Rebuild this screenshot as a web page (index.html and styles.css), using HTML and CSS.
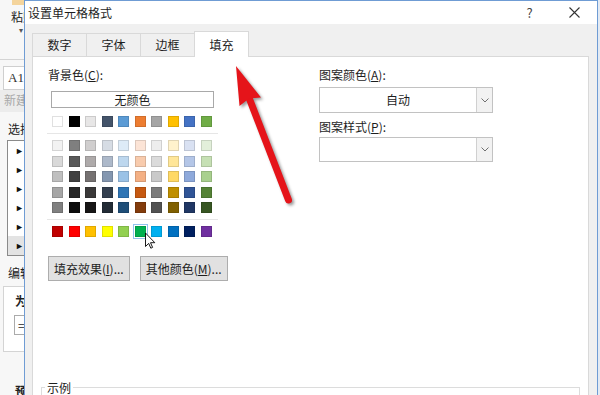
FILE: index.html
```html
<!DOCTYPE html>
<html lang="zh-CN">
<head>
    <meta charset="UTF-8">
    <title>设置单元格格式</title>
    <link rel="stylesheet" href="styles.css">
</head>
<body>
<div class="screen">
    <aside class="sheet-side">
        <div class="paste-icon"></div>
        <div class="paste-label">粘贴</div>
        <div class="side-caret">▾</div>
        <div class="ribbon-edge"></div>
        <div class="name-box">A1</div>
        <div class="new-rule">新建</div>
        <div class="side-head">选择</div>
        <ul class="rule-list">
            <li>►</li><li>►</li><li>►</li><li>►</li><li>►</li><li class="current">►</li>
        </ul>
        <div class="side-head edit-head">编辑</div>
        <div class="edit-box">
            <div class="edit-bold">为</div>
            <div class="edit-input">=</div>
        </div>
        <div class="side-head preview-head">预览</div>
    </aside>

    <div class="dialog">
        <div class="titlebar">
            <span class="title">设置单元格格式</span>
            <span class="title-btn">?</span>
            <span class="title-btn">
                <svg width="11" height="11" viewBox="0 0 11 11"><path d="M0.5 0.5 L10.5 10.5 M10.5 0.5 L0.5 10.5" stroke="#333" stroke-width="1.1" fill="none"/></svg>
            </span>
        </div>

        <div class="dialog-body">
            <div class="tabs">
                <div class="tab">数字</div>
                <div class="tab">字体</div>
                <div class="tab">边框</div>
                <div class="tab active">填充</div>
            </div>

            <div class="panel">
                <div class="cols">
                    <div class="bg-col">
                        <div class="label">背景色(<u>C</u>):</div>
                        <div class="no-color">无颜色</div>

                        <div class="swatches">
                            <span style="background:#ffffff"></span><span style="background:#000000"></span><span style="background:#e7e6e6"></span><span style="background:#44546a"></span><span style="background:#5b9bd5"></span><span style="background:#ed7d31"></span><span style="background:#a5a5a5"></span><span style="background:#ffc000"></span><span style="background:#4472c4"></span><span style="background:#70ad47"></span>
                        </div>
                        <div class="sep"></div>
                        <div class="swatches shades">
                            <span style="background:#f2f2f2"></span><span style="background:#7f7f7f"></span><span style="background:#d0cece"></span><span style="background:#d6dce4"></span><span style="background:#ddebf7"></span><span style="background:#fce4d6"></span><span style="background:#ededed"></span><span style="background:#fff2cc"></span><span style="background:#d9e1f2"></span><span style="background:#e2efda"></span>
                            <span style="background:#d9d9d9"></span><span style="background:#595959"></span><span style="background:#aeaaaa"></span><span style="background:#adb9ca"></span><span style="background:#bdd7ee"></span><span style="background:#f8cbad"></span><span style="background:#dbdbdb"></span><span style="background:#ffe699"></span><span style="background:#b4c6e7"></span><span style="background:#c6e0b4"></span>
                            <span style="background:#bfbfbf"></span><span style="background:#404040"></span><span style="background:#757171"></span><span style="background:#8497b0"></span><span style="background:#9bc2e6"></span><span style="background:#f4b084"></span><span style="background:#c9c9c9"></span><span style="background:#ffd966"></span><span style="background:#8ea9db"></span><span style="background:#a9d08e"></span>
                            <span style="background:#a6a6a6"></span><span style="background:#262626"></span><span style="background:#3a3838"></span><span style="background:#333f4f"></span><span style="background:#2f75b5"></span><span style="background:#c65911"></span><span style="background:#7b7b7b"></span><span style="background:#bf8f00"></span><span style="background:#305496"></span><span style="background:#548235"></span>
                            <span style="background:#808080"></span><span style="background:#0d0d0d"></span><span style="background:#171616"></span><span style="background:#222b35"></span><span style="background:#1f4e78"></span><span style="background:#833c0c"></span><span style="background:#525252"></span><span style="background:#806000"></span><span style="background:#203764"></span><span style="background:#375623"></span>
                        </div>
                        <div class="sep"></div>
                        <div class="swatches">
                            <span style="background:#c00000"></span><span style="background:#ff0000"></span><span style="background:#ffc000"></span><span style="background:#ffff00"></span><span style="background:#92d050"></span><span class="picked" style="background:#00b050"></span><span style="background:#00b0f0"></span><span style="background:#0070c0"></span><span style="background:#002060"></span><span style="background:#7030a0"></span>
                        </div>

                        <div class="buttons">
                            <button class="btn">填充效果(<u>I</u>)...</button>
                            <button class="btn">其他颜色(<u>M</u>)...</button>
                        </div>
                    </div>

                    <div class="pattern-col">
                        <div class="label">图案颜色(<u>A</u>):</div>
                        <div class="combo">
                            <span class="combo-value">自动</span>
                            <span class="combo-arrow"><svg width="8" height="5" viewBox="0 0 8 5"><path d="M0.5 0.5 L4 4 L7.5 0.5" stroke="#707070" fill="none"/></svg></span>
                        </div>
                        <div class="label second">图案样式(<u>P</u>):</div>
                        <div class="combo tight">
                            <span class="combo-value"></span>
                            <span class="combo-arrow"><svg width="8" height="5" viewBox="0 0 8 5"><path d="M0.5 0.5 L4 4 L7.5 0.5" stroke="#707070" fill="none"/></svg></span>
                        </div>
                    </div>
                </div>

                <fieldset class="sample">
                    <legend>示例</legend>
                </fieldset>
            </div>
        </div>
    </div>

    <div class="sheet-right"></div>

    <!-- annotation arrow and mouse pointer drawn over the screenshot -->
    <svg class="overlay" width="600" height="395" viewBox="0 0 600 395">
        <g class="red-arrow">
            <line x1="249.5" y1="99" x2="288.5" y2="200" stroke="#e5141a" stroke-width="7" stroke-linecap="round"/>
            <polygon points="236,66 261,97.5 249,98.5 239.5,106" fill="#e5141a"/>
        </g>
        <path d="M145.5 233 V246.5 L148.7 243.4 L150.8 248.2 L152.6 247.4 L150.5 242.7 H154.8 Z" fill="#fff" stroke="#000" stroke-width="0.9" stroke-linejoin="round"/>
    </svg>
</div>
</body>
</html>
```

FILE: styles.css
```css
* {
    box-sizing: border-box;
}

body {
    margin: 0;
    font-family: "Noto Sans CJK SC", "Noto Sans", sans-serif;
    font-size: 12px;
    color: #1e1e1e;
}

.screen {
    position: relative;
    width: 600px;
    height: 395px;
    overflow: hidden;
    display: flex;
    background: #f6f6f6;
}

/* excel task pane behind the dialog */
.sheet-side {
    width: 24px;
    flex: none;
    overflow: hidden;
    white-space: nowrap;
    background: #f7f7f7;
    line-height: 16px;
}

.paste-icon {
    width: 14px;
    height: 5px;
    margin-left: 12px;
    background: #f4d49c;
}

.paste-label {
    margin-top: 4px;
    padding-left: 11px;
}

.side-caret {
    height: 10px;
    line-height: 10px;
    font-size: 8px;
    padding-left: 19px;
    color: #555;
}

.ribbon-edge {
    height: 1px;
    margin-top: 24px;
    background: #d4d4d4;
}

.name-box {
    height: 24px;
    margin: 6px 0 0 3px;
    padding-left: 4px;
    line-height: 22px;
    border: 1px solid #cfcfcf;
    border-right: none;
    background: #fff;
    font-family: "Liberation Serif", serif;
    font-size: 13px;
    color: #333;
}

.new-rule {
    height: 22px;
    line-height: 20px;
    padding-left: 4px;
    background: #ececec;
    color: #a8a8a8;
}

.side-head {
    margin-top: 9px;
    padding-left: 8px;
    color: #222;
}

.rule-list {
    list-style: none;
    margin: 3px 0 0 7px;
    padding: 0;
    border: 1px solid #8a8a8a;
    border-right: none;
    background: #fff;
}

.rule-list li {
    height: 19px;
    line-height: 19px;
    padding-left: 7px;
    font-size: 9px;
    color: #111;
}

.rule-list li.current {
    background: #e3e3e3;
}

.edit-head {
    margin-top: 9px;
}

.edit-box {
    height: 66px;
    margin: 5px 0 0 3px;
    border: 1px solid #d4d4d4;
    border-right: none;
    background: #fff;
    padding-top: 6px;
}

.edit-bold {
    padding-left: 11px;
    font-weight: bold;
}

.edit-input {
    height: 20px;
    margin: 6px 0 0 10px;
    padding-left: 3px;
    line-height: 18px;
    border: 1px solid #ababab;
    border-right: none;
}

.preview-head {
    margin-top: 31px;
    padding-left: 15px;
    font-weight: bold;
}

.sheet-right {
    flex: 1;
    background: #e3eaf3;
}

/* dialog */
.dialog {
    width: 574px;
    flex: none;
    display: flex;
    flex-direction: column;
    border: 1px solid #6f9cd4;
    border-bottom: none;
    background: #f0f0f0;
}

.titlebar {
    flex: none;
    height: 23px;
    display: flex;
    align-items: center;
    padding-left: 3px;
    background: #fff;
}

.title {
    flex: 1;
}

.title-btn {
    width: 45px;
    display: flex;
    justify-content: center;
    align-items: center;
    font-size: 13px;
    color: #444;
}

.dialog-body {
    flex: 1;
    display: flex;
    flex-direction: column;
    padding: 0 8px 0 7px;
}

.tabs {
    flex: none;
    height: 32px;
    display: flex;
    align-items: flex-end;
}

.tab {
    height: 23px;
    padding: 0 14.5px;
    line-height: 22px;
    border: 1px solid #d9d9d9;
    border-bottom: none;
    margin-right: -1px;
    background: #f0f0f0;
}

.tab.active {
    position: relative;
    z-index: 1;
    height: 26px;
    line-height: 25px;
    margin-bottom: -1px;
    background: #fff;
}

.panel {
    flex: 1;
    padding: 10px 8px 0 8px;
    border: 1px solid #d9d9d9;
    border-bottom: none;
    background: #fff;
}

.cols {
    display: grid;
    grid-template-columns: 270px 175px;
    margin-left: 7px;
}

.label {
    line-height: 16px;
}

.no-color {
    width: 163px;
    height: 17px;
    margin: 8px 0 0 3px;
    line-height: 15px;
    text-align: center;
    border: 1px solid #a9a9a9;
}

.swatches {
    display: grid;
    grid-template-columns: repeat(10, 11px);
    grid-auto-rows: 11px;
    column-gap: 5.5px;
    margin: 8px 0 0 4px;
}

.shades {
    row-gap: 4.6px;
}

.swatches span {
    box-shadow: inset 0 0 0 1px rgba(0, 0, 0, 0.12);
}

.swatches span.picked {
    outline: 1px solid #92c3ee;
    outline-offset: 1px;
}

.sep {
    width: 171px;
    height: 1px;
    margin: 6px 0 0 -1px;
    background: #e6e6e6;
}

.sep + .swatches {
    margin-top: 6px;
}

.buttons {
    display: flex;
    gap: 10px;
    margin-top: 18.5px;
}

.btn {
    height: 25px;
    padding: 0 5px;
    font: inherit;
    color: #1e1e1e;
    border: 1px solid #adadad;
    background: #e1e1e1;
    white-space: nowrap;
}

.pattern-col {
    padding-left: 1px;
}

.label.second {
    margin-top: 6px;
}

.combo {
    height: 26px;
    margin-top: 4px;
    display: flex;
    border: 1px solid #c2c2c2;
    background: #fff;
}

.combo.tight {
    margin-top: 2px;
    height: 25px;
}

.combo-value {
    flex: 1;
    text-align: center;
    line-height: 24px;
}

.combo-arrow {
    width: 16px;
    display: flex;
    justify-content: center;
    align-items: center;
    border-left: 1px solid #d0d0d0;
    background: #f2f2f2;
}

.sample {
    height: 60px;
    margin: 99px 0 0 0;
    padding: 0 0 0 3px;
    border: 1px solid #dcdcdc;
}

.sample legend {
    padding: 0 2px;
    line-height: 16px;
}

.overlay {
    position: absolute;
    top: 0;
    left: 0;
    pointer-events: none;
}

.red-arrow {
    filter: drop-shadow(2px 2px 1.5px rgba(0, 0, 0, 0.4));
}
```
